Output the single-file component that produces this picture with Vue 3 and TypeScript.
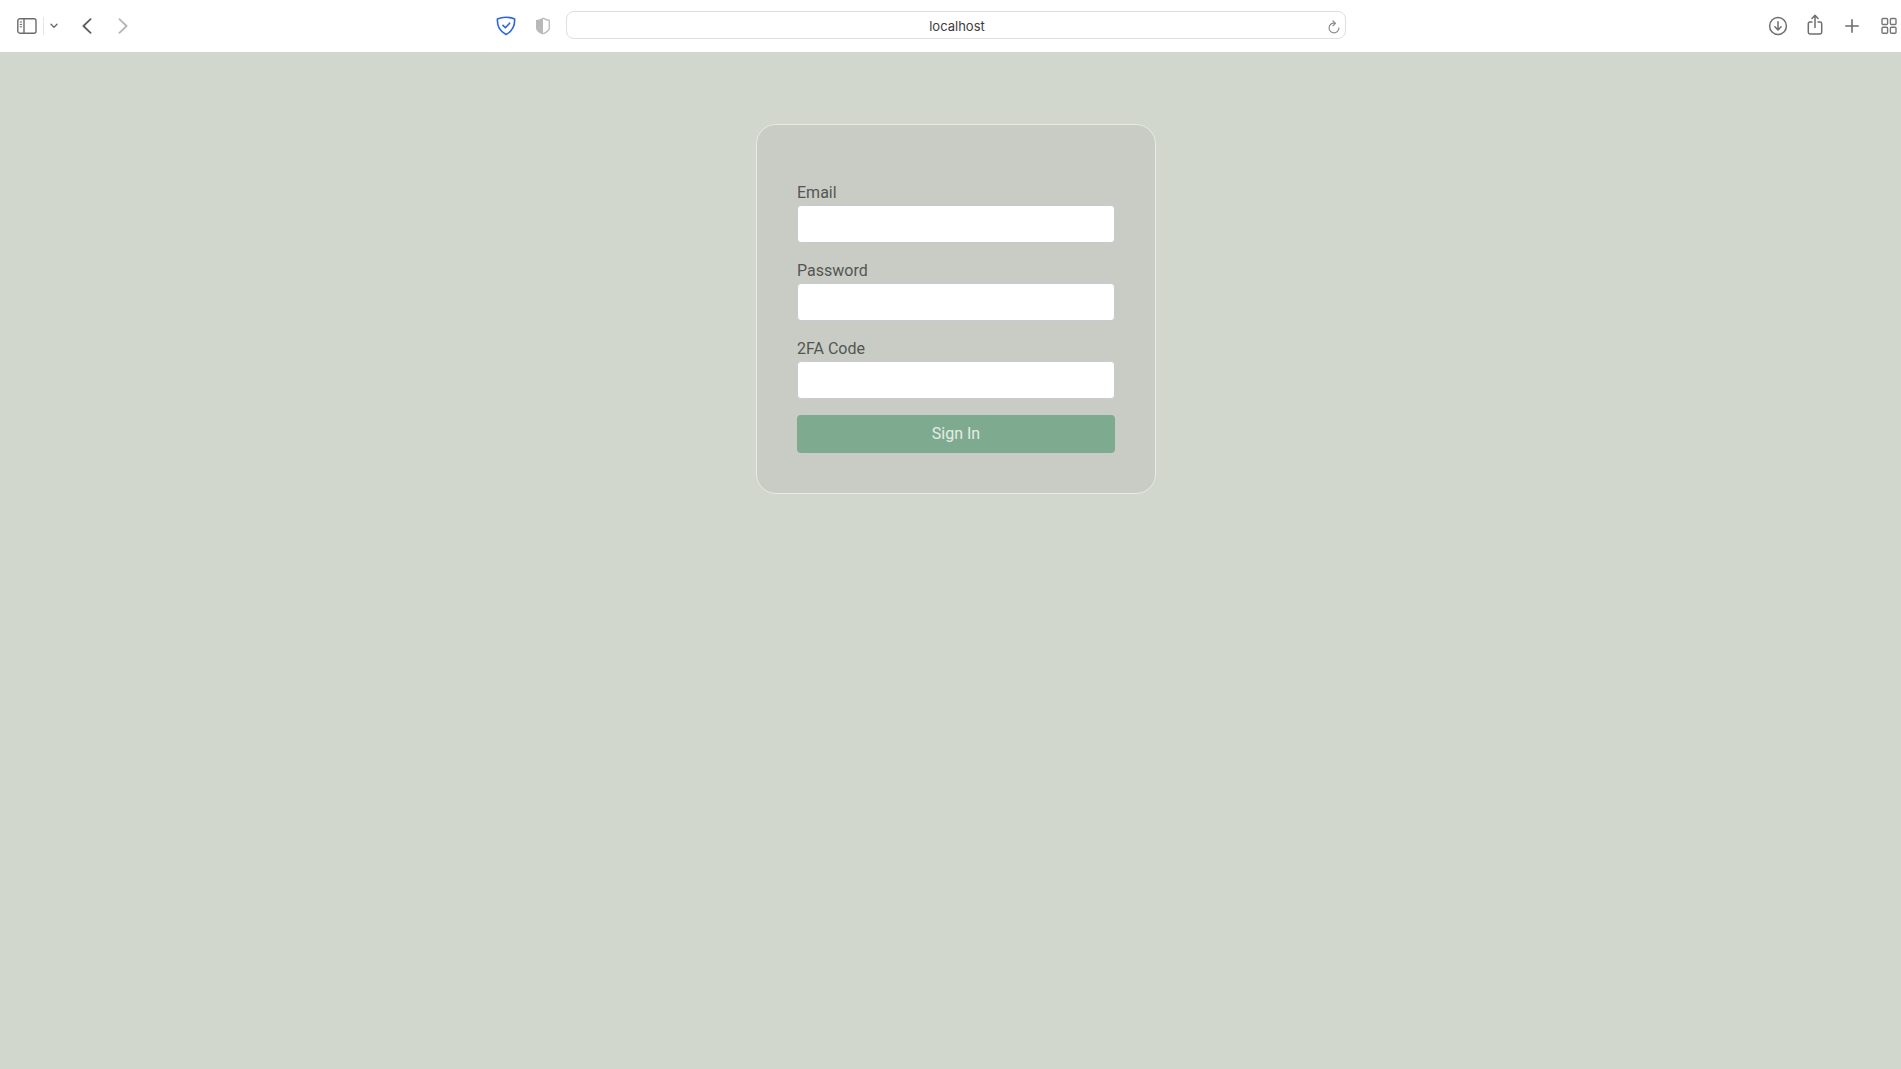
<script setup lang="ts">
import { ref } from 'vue'

interface Field {
  id: string
  label: string
  type: string
}

const address = ref('localhost')

const fields: Field[] = [
  { id: 'email', label: 'Email', type: 'email' },
  { id: 'password', label: 'Password', type: 'password' },
  { id: 'code', label: '2FA Code', type: 'text' },
]

const values = ref<Record<string, string>>({ email: '', password: '', code: '' })
</script>

<template>
  <div class="window">
    <header class="toolbar">
      <div class="side side-left">
        <div class="group">
          <button class="tool wide" type="button" aria-label="Sidebar">
            <svg width="20" height="16" viewBox="0 0 20 16" fill="none" stroke="#6c6c6c" stroke-width="1.4">
              <rect x="0.8" y="0.8" width="18.2" height="14.4" rx="2" />
              <path d="M7 1v14" />
              <path d="M2.7 4h2.4M2.7 6.4h2.4M2.7 8.8h2.4" stroke-width="1" />
            </svg>
          </button>
          <span class="divider"></span>
          <button class="tool narrow" type="button" aria-label="Tab groups">
            <svg width="8" height="6" viewBox="0 0 8 6" fill="none" stroke="#6c6c6c" stroke-width="1.4" stroke-linecap="round" stroke-linejoin="round">
              <path d="M1 1.3l3 3 3-3" />
            </svg>
          </button>
        </div>
        <div class="group history">
          <button class="tool" type="button" aria-label="Back">
            <svg width="10" height="16" viewBox="0 0 10 16" fill="none" stroke="#5e5e5e" stroke-width="1.8" stroke-linecap="round" stroke-linejoin="round">
              <path d="M8.6 1.2L1.4 8l7.2 6.8" />
            </svg>
          </button>
          <button class="tool" type="button" aria-label="Forward">
            <svg width="10" height="16" viewBox="0 0 10 16" fill="none" stroke="#b5b5b5" stroke-width="1.8" stroke-linecap="round" stroke-linejoin="round">
              <path d="M1.4 1.2L8.6 8l-7.2 6.8" />
            </svg>
          </button>
        </div>
        <div class="group shields">
          <button class="tool" type="button" aria-label="Protection">
            <svg width="20" height="20" viewBox="0 0 20 20" fill="none" stroke="#2b66de" stroke-width="1.6" stroke-linecap="round" stroke-linejoin="round">
              <path d="M10 1.3C7 1.3 4 1.8 1.4 3 1 10 4 15.5 10 18.5 16 15.5 19 10 18.6 3 16 1.8 13 1.3 10 1.3z" />
              <path d="M7 9.4l2.4 2.4 4.2-4.6" />
            </svg>
          </button>
          <button class="tool" type="button" aria-label="Privacy report">
            <svg width="14" height="18" viewBox="0 0 14 18" fill="none">
              <path d="M7 .4C5 1.8 2.6 2.5 0 2.9V11.6C.6 14.6 4 16.5 7 17.6z" fill="#b9b9b9" />
              <path d="M7 1.2C9 2.4 11 3.1 13.3 3.5V11.4C12.8 14 10 15.6 7 16.8" stroke="#bdbdbd" stroke-width="1.4" />
            </svg>
          </button>
        </div>
      </div>

      <div class="address">
        <input v-model="address" class="url" type="text" aria-label="Address" />
        <button class="reload" type="button" aria-label="Reload">
          <svg width="12" height="14" viewBox="0 0 12 14" fill="none" stroke="#8c8c8c" stroke-width="1.2" stroke-linecap="round" stroke-linejoin="round">
            <path d="M6.8 3.3C3.5 2.8 1.1 5 1.1 7.9a4.9 4.9 0 0 0 9.8 0" />
            <path d="M5 1l2.5 2.4L5 5.7" />
          </svg>
        </button>
      </div>

      <div class="side side-right">
        <button class="tool" type="button" aria-label="Downloads">
          <svg width="20" height="20" viewBox="0 0 20 20" fill="none" stroke="#6e6e6e" stroke-width="1.5" stroke-linecap="round" stroke-linejoin="round">
            <circle cx="10" cy="10" r="8.4" />
            <path d="M10 5.8v8M6.9 10.8l3.1 3.2 3.1-3.2" />
          </svg>
        </button>
        <button class="tool" type="button" aria-label="Share">
          <svg class="share" width="16" height="22" viewBox="0 0 16 22" fill="none" stroke="#6e6e6e" stroke-width="1.5" stroke-linecap="round" stroke-linejoin="round">
            <path d="M5 8H3Q1.3 8 1.3 9.7V18.3Q1.3 20 3 20H13Q14.7 20 14.7 18.3V9.7Q14.7 8 13 8H11" />
            <path d="M8 13.5V1.5M4.9 4.5L8 1.4l3.1 3.1" />
          </svg>
        </button>
        <button class="tool" type="button" aria-label="New tab">
          <svg width="14" height="14" viewBox="0 0 14 14" fill="none" stroke="#6e6e6e" stroke-width="1.6" stroke-linecap="round">
            <path d="M7 .8v12.4M.8 7h12.4" />
          </svg>
        </button>
        <button class="tool" type="button" aria-label="Tab overview">
          <svg width="16" height="18" viewBox="0 0 16 18" fill="none" stroke="#777" stroke-width="1.4">
            <rect x="1" y="1.5" width="5.6" height="6" rx="1" />
            <rect x="9.4" y="1.5" width="5.6" height="6" rx="1" />
            <rect x="1" y="10.3" width="5.6" height="6" rx="1" />
            <rect x="9.4" y="10.3" width="5.6" height="6" rx="1" />
          </svg>
        </button>
      </div>
    </header>

    <main class="page">
      <form class="card" @submit.prevent>
        <div v-for="field in fields" :key="field.id" class="field">
          <label :for="field.id">{{ field.label }}</label>
          <input :id="field.id" v-model="values[field.id]" :type="field.type" />
        </div>
        <button class="submit" type="submit">Sign In</button>
      </form>
    </main>
  </div>
</template>

<style>
body {
  margin: 0;
  background: #d1d7cd;
}
</style>

<style scoped>
.window {
  min-height: 100vh;
  background: #d1d7cd;
  font-family: Roboto, "Liberation Sans", sans-serif;
  font-size: 16px;
  line-height: 24px;
}

.window * {
  box-sizing: border-box;
}

button {
  display: flex;
  align-items: center;
  justify-content: center;
  padding: 0;
  border: 0;
  background: none;
}

svg {
  display: block;
  flex: none;
}

.toolbar {
  display: grid;
  grid-template-columns: minmax(0, 1fr) minmax(0, 780px) minmax(0, 1fr);
  align-items: center;
  height: 52px;
  padding-left: 11px;
  background: #fff;
}

.side,
.group {
  display: flex;
  align-items: center;
}

.tool {
  width: 24px;
  height: 24px;
}

.tool.wide {
  width: 32px;
}

.tool.narrow {
  width: 20px;
}

.divider {
  width: 1px;
  height: 18px;
  background: #e6e6e6;
}

.history {
  gap: 12px;
  margin-left: 11px;
}

.shields {
  gap: 13px;
  margin-left: auto;
  margin-right: 11px;
}

.side-right {
  justify-content: flex-end;
  gap: 13px;
}

.share {
  margin-bottom: 2px;
}

.address {
  display: flex;
  align-items: center;
  height: 28px;
  margin-bottom: 2px;
  padding: 0 4px 0 20px;
  border: 1px solid #dfdfdf;
  border-radius: 8px;
}

.url {
  flex: 1;
  min-width: 0;
  height: 26px;
  padding: 1px 0 0;
  border: 0;
  outline: 0;
  background: none;
  color: #3c3c3c;
  font-family: Inter, "Liberation Sans", sans-serif;
  font-size: 13px;
  text-align: center;
}

.reload {
  width: 14px;
  height: 24px;
  padding-top: 4px;
}

.page {
  display: flex;
  justify-content: center;
  padding: 72px 0 40px 11px;
}

.card {
  width: 400px;
  max-width: 100%;
  padding: 56px 40px 40px;
  border: 1px solid #e8ebe6;
  border-radius: 20px;
  background: #c9ccc5;
}

.field {
  margin-bottom: 16px;
}

.field label {
  display: block;
  color: #545653;
}

.field input {
  display: block;
  width: 100%;
  height: 38px;
  padding: 6px 12px;
  border: 1px solid #c5cbd1;
  border-radius: 4px;
  background: #fff;
  font: inherit;
}

.submit {
  width: 100%;
  height: 38px;
  border-radius: 4px;
  background: #7eab90;
  color: #e8ebe6;
  font: inherit;
}
</style>
